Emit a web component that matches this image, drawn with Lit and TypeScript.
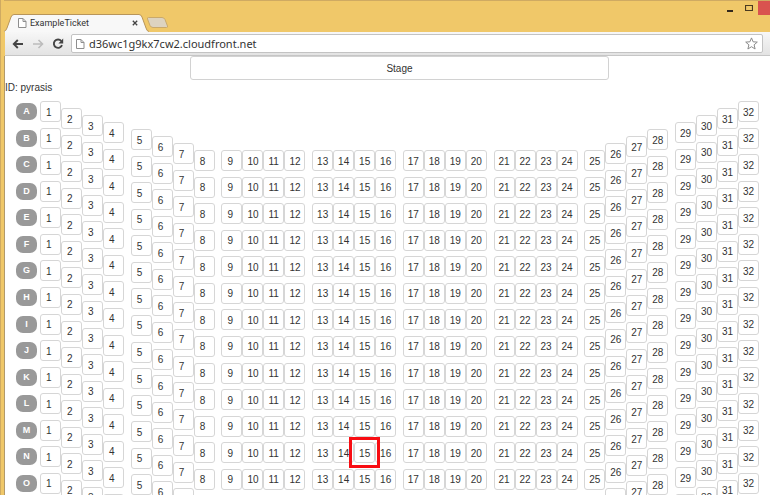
import { LitElement, html, css, svg } from "lit";
import { customElement, property } from "lit/decorators.js";
import { classMap } from "lit/directives/class-map.js";
import { styleMap } from "lit/directives/style-map.js";

const ROWS = "ABCDEFGHIJKLMNO".split("");
const SEATS_PER_GROUP = 4;
const SEATS_PER_ROW = 32;
const DROP_STEP = 7;
const MARKED = { row: "L", seat: 15 };
const GROUPS = Array.from({ length: SEATS_PER_ROW / SEATS_PER_GROUP }, (_, g) =>
  Array.from({ length: SEATS_PER_GROUP }, (_, s) => g * SEATS_PER_GROUP + s + 1)
);

// The wings of the hall rise by one step per seat; the middle seats are level.
const seatDrop = (n: number) => Math.min(n - 1, SEATS_PER_ROW - n, 7) * DROP_STEP;

const pageIcon = svg`
  <path d="M.5 .5h4.500l3 3v6h-7.500z" fill="#fff" stroke="#8e8e8e"/>
  <path d="M5 .5v3h3" fill="none" stroke="#8e8e8e"/>`;

@customElement("browser-chrome")
export class BrowserChrome extends LitElement {
  @property() title = "";
  @property() address = "";

  static styles = css`
    :host {
      display: block;
      font-family: Roboto, sans-serif;
    }
    button {
      padding: 0;
      border: 0;
      background: none;
      display: flex;
      align-items: center;
      justify-content: center;
    }
    svg {
      display: block;
      flex: none;
    }
    .strip {
      display: flex;
      height: 32px;
      box-sizing: border-box;
      border-top: 1px solid #cfaa62;
    }
    .tab {
      position: relative;
      display: flex;
      align-items: center;
      width: 145px;
      height: 18px;
      margin-top: 13px;
      padding: 0 10px 0 14px;
      box-sizing: border-box;
      font-size: 9px;
      line-height: 16px;
      color: #333;
    }
    .shape {
      position: absolute;
      left: 0;
      top: 0;
    }
    .tab .icon {
      position: relative;
      margin-right: 3px;
    }
    .name {
      position: relative;
      flex: 1;
      white-space: nowrap;
    }
    .close-tab {
      position: relative;
      width: 8px;
      height: 8px;
    }
    .new-tab {
      height: 12px;
      margin-top: 16px;
      margin-left: -3px;
    }
    .window {
      display: flex;
      margin-left: auto;
      height: 14px;
    }
    .window button {
      width: 18px;
    }
    .window .close {
      width: 12px;
      background: #d9534f;
    }
    .bar {
      display: flex;
      align-items: center;
      height: 24px;
      margin-left: 1px;
      padding: 0 7px;
      box-sizing: border-box;
      border-bottom: 1px solid #c6c6c6;
      background: linear-gradient(#f7f7f7, #e3e3e3);
    }
    .nav {
      display: flex;
      gap: 8px;
      margin-right: 7px;
    }
    .nav button {
      width: 12px;
      height: 12px;
    }
    .box {
      display: flex;
      align-items: center;
      flex: 1;
      height: 19px;
      padding: 0 4px;
      box-sizing: border-box;
      border: 1px solid #c3c3c3;
      border-radius: 2px;
      background: #fff;
    }
    .url {
      flex: 1;
      min-width: 0;
      margin: 0;
      padding: 0 0 0 4px;
      border: 0;
      outline: 0;
      background: none;
      font: 11px/16px "Noto Sans", sans-serif;
      color: #333;
    }
  `;

  render() {
    return html`
      <div class="strip">
        <div class="tab">
          <svg class="shape" width="145" height="18" viewBox="0 0 145 18">
            <path d="M0 17.500Q2 17 3 14L7 3Q8 .5 10 .5H135Q137 .5 138 3L142 14Q143 17.500 145 17.500V18H0z" fill="#f8f8f8"/>
            <path d="M0 17.500Q2 17 3 14L7 3Q8 .5 10 .5H135Q137 .5 138 3L142 14Q143 17.500 145 17.500" fill="none" stroke="#b8955a"/>
          </svg>
          <svg class="icon" width="9" height="10" viewBox="0 0 9 10">${pageIcon}</svg>
          <span class="name">${this.title}</span>
          <button class="close-tab" aria-label="Close tab">
            <svg width="6" height="6" viewBox="0 0 6 6"><path d="M.8 .8l4.400 4.400M5.200 .8L.8 5.200" stroke="#444" stroke-width="1.300"/></svg>
          </button>
        </div>
        <button class="new-tab" aria-label="New tab">
          <svg width="23" height="12" viewBox="0 0 23 12">
            <path d="M2.500 .5H16Q18 .5 19 2.500L21.500 9Q22 10.500 20.500 10.500H7Q5 10.500 4 8.500L1.500 2Q1 .5 2.500 .5z" fill="#ddd3c0" stroke="#c9a96c"/>
          </svg>
        </button>
        <div class="window">
          <button aria-label="Minimize"><svg width="8" height="12" viewBox="0 0 8 12"><path d="M0 9h6" stroke="#33291c" stroke-width="2"/></svg></button>
          <button aria-label="Maximize"><svg width="8" height="8" viewBox="0 0 8 8"><path d="M.5 1.500h7v5h-7zM0 1.500h8" fill="none" stroke="#4a3a20" stroke-width="1.200"/></svg></button>
          <button class="close" aria-label="Close"></button>
        </div>
      </div>
      <div class="bar">
        <div class="nav">
          <button aria-label="Back">
            <svg width="12" height="12" viewBox="0 0 12 12"><path d="M11 6H2M5.800 2L1.800 6l4 4" fill="none" stroke="#444" stroke-width="1.900"/></svg>
          </button>
          <button aria-label="Forward" disabled>
            <svg width="12" height="12" viewBox="0 0 12 12"><path d="M1 6h9M6.500 2l4 4-4 4" fill="none" stroke="#bcbcbc" stroke-width="1.600"/></svg>
          </button>
          <button aria-label="Reload">
            <svg width="12" height="12" viewBox="0 0 12 12"><path d="M9.300 3A4.200 4.200 0 1 0 10 7.200" fill="none" stroke="#444" stroke-width="1.900"/><path d="M11.200 .6v4.800H6.400z" fill="#444"/></svg>
          </button>
        </div>
        <div class="box">
          <svg width="9" height="10" viewBox="0 0 9 10">${pageIcon}</svg>
          <input class="url" aria-label="Address" .value=${this.address} />
          <button aria-label="Bookmark">
            <svg width="13" height="13" viewBox="0 0 13 13"><path d="M6.500 .9l1.600 3.900 4.200 .3-3.200 2.700 1 4.200-3.600-2.300L2.900 12l1-4.200L.7 5.100l4.200-.3z" fill="#fff" stroke="#8b8b8b"/></svg>
          </button>
        </div>
      </div>
    `;
  }
}

@customElement("seat-row")
export class SeatRow extends LitElement {
  @property() name = "";
  @property({ type: Number }) marked = 0;

  static styles = css`
    :host {
      display: flex;
      align-items: flex-start;
      gap: 3px;
      height: 21px;
    }
    .badge {
      width: 21px;
      height: 17px;
      margin-top: 2px;
      border-radius: 7px;
      background: #999;
      color: #fff;
      font-size: 9px;
      font-weight: bold;
      line-height: 17px;
      text-align: center;
    }
    .groups {
      display: flex;
      flex: 1;
      justify-content: space-between;
    }
    .group {
      display: flex;
      align-items: flex-start;
    }
    .seat {
      position: relative;
      width: 21px;
      height: 21px;
      padding: 2px 0 0 4px;
      box-sizing: border-box;
      border: 1px solid #d6d6d6;
      border-radius: 3px;
      background: #fff;
      color: #333;
      font: inherit;
      text-align: left;
    }
    .single {
      padding-left: 5px;
    }
    .marked {
      z-index: 1;
    }
    .marked::after {
      content: "";
      position: absolute;
      inset: -6px;
      border: 3px solid #f80c12;
    }
  `;

  render() {
    return html`
      <span class="badge">${this.name}</span>
      <div class="groups">
        ${GROUPS.map(
          (group) => html`<div class="group">
            ${group.map(
              (n) => html`<button
                class=${classMap({ seat: true, single: n < 10, marked: n === this.marked })}
                style=${styleMap({ marginTop: `${seatDrop(n)}px` })}
              >${n}</button>`
            )}
          </div>`
        )}
      </div>
    `;
  }
}

@customElement("app-root")
export class AppRoot extends LitElement {
  static styles = css`
    :host {
      display: flex;
      flex-direction: column;
      min-height: 100vh;
      box-sizing: border-box;
      border-left: 1px solid #cfaa62;
      padding-left: 3px;
      overflow: clip;
      background: #f0c869;
      font: 10px/14px "Liberation Sans", Arial, sans-serif;
      color: #333;
    }
    main {
      display: flex;
      flex-direction: column;
      flex: 1;
      padding-bottom: 1px;
      border-left: 1px solid #b39a6a;
      background: #fff;
    }
    .head {
      display: grid;
      grid-template-columns: 185fr 419fr 161fr;
    }
    .stage {
      grid-column: 2;
      height: 24px;
      box-sizing: border-box;
      border: 1px solid #d2d2d2;
      border-radius: 3px;
      line-height: 24px;
      text-align: center;
    }
    .user {
      margin: 1px 0 6px;
    }
    .hall {
      display: flex;
      flex-direction: column;
      flex: 1;
      justify-content: space-between;
      gap: 5px;
      padding: 0 11px;
    }
  `;

  render() {
    return html`
      <browser-chrome title="ExampleTicket" address="d36wc1g9kx7cw2.cloudfront.net"></browser-chrome>
      <main>
        <div class="head"><div class="stage">Stage</div></div>
        <p class="user">ID: pyrasis</p>
        <div class="hall">
          ${ROWS.map(
            (r) => html`<seat-row name=${r} marked=${r === MARKED.row ? MARKED.seat : 0}></seat-row>`
          )}
        </div>
      </main>
    `;
  }
}
